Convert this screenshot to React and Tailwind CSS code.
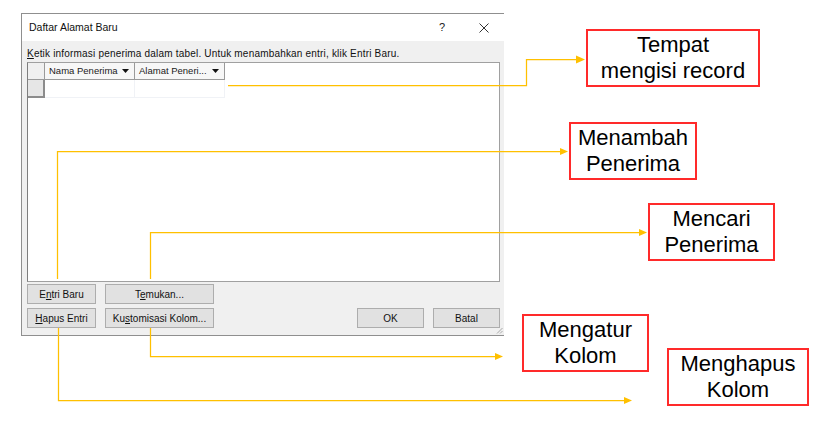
import React from "react";

function HeaderCell({ label }) {
  return (
    <div className="w-[90px] h-full flex items-center justify-between pl-[4px] pr-[5px] bg-[#f7f7f7] border-r border-b border-[#9a9a9a]">
      <span className="text-[9.5px] leading-none text-[#1a1a1a] whitespace-nowrap">{label}</span>
      <svg width="7" height="4" viewBox="0 0 7 4" className="shrink-0">
        <polygon points="0,0 7,0 3.5,4" fill="#111" />
      </svg>
    </div>
  );
}

function Btn({ className, children }) {
  return (
    <div
      className={
        "h-[20px] flex items-center justify-center bg-[#e1e1e1] border border-[#adadad] text-[10px] text-[#111] whitespace-nowrap " +
        className
      }
    >
      {children}
    </div>
  );
}

function Note({ className, lines }) {
  return (
    <div
      className={
        "absolute flex flex-col items-center justify-center border-2 border-[#ff2a2a] bg-white text-[22px] leading-[26.5px] text-black " +
        className
      }
    >
      {lines.map((l) => (
        <span key={l} className="whitespace-nowrap">
          {l}
        </span>
      ))}
    </div>
  );
}

export default function App() {
  const c = "#ffc000";
  return (
    <div className="relative w-[819px] h-[428px] bg-white overflow-hidden font-['Liberation_Sans',Arial,sans-serif]">
      <div className="ml-[21px] pt-[13px]">
        <div className="relative w-[483px] border-l border-t border-b border-[#8f8f8f] bg-[#f0f0f0] flex flex-col">
          {/* title bar */}
          <div className="h-[27px] bg-white flex items-center pl-[7px] pr-[15px]">
            <span className="text-[10.5px] text-[#111]">Daftar Alamat Baru</span>
            <span className="ml-auto text-[11px] text-[#222]">?</span>
            <svg width="10" height="10" viewBox="0 0 10 10" className="ml-[34px]">
              <path d="M0.5 0.5 L9.5 9.5 M9.5 0.5 L0.5 9.5" stroke="#333" strokeWidth="1" />
            </svg>
          </div>
          {/* body */}
          <div className="pl-[5px] pr-[4px] pt-[5px] pb-[7px]">
            <div className="h-[14px] flex items-center text-[10px] tracking-[0.19px] text-[#111] whitespace-nowrap">
              <span>
                <span className="underline">K</span>etik informasi penerima dalam tabel. Untuk menambahkan entri, klik Entri Baru.
              </span>
            </div>
            <div className="mt-[2px] h-[220px] border border-[#a0a0a0] border-l-[#7e7e7e] bg-white">
              <div className="flex h-[17px]">
                <div className="w-[17px] h-full bg-[#f0f0f0] border-r border-b border-[#9a9a9a]" />
                <HeaderCell label="Nama Penerima" />
                <HeaderCell label="Alamat Peneri..." />
              </div>
              <div className="flex h-[18px]">
                <div className="w-[17px] h-full bg-[#e6e6e6] border-r-2 border-b-2 border-[#8c8c8c]" />
                <div className="w-[90px] h-full border-r border-b border-[#f0f2f6]" />
                <div className="w-[90px] h-full border-r border-b border-[#f0f2f6]" />
              </div>
            </div>
            <div className="mt-[2px] flex gap-[9px]">
              <Btn className="w-[69px]">
                <span>
                  E<span className="underline">n</span>tri Baru
                </span>
              </Btn>
              <Btn className="w-[109px]">
                <span>
                  T<span className="underline">e</span>mukan...
                </span>
              </Btn>
            </div>
            <div className="mt-[4px] flex gap-[9px]">
              <Btn className="w-[69px]">
                <span>
                  <span className="underline">H</span>apus Entri
                </span>
              </Btn>
              <Btn className="w-[109px]">
                <span>
                  Ku<span className="underline">s</span>tomisasi Kolom...
                </span>
              </Btn>
              <Btn className="w-[67px] ml-auto">OK</Btn>
              <Btn className="w-[67px]">Batal</Btn>
            </div>
          </div>
          <svg width="7" height="7" viewBox="0 0 7 7" className="absolute right-[1px] bottom-[1px]">
            <path d="M6.5 1 L1 6.5 M6.5 4 L4 6.5" stroke="#a8a8a8" strokeWidth="1" />
          </svg>
        </div>
      </div>

      {/* connectors */}
      <svg className="absolute left-0 top-0 pointer-events-none" width="819" height="428" viewBox="0 0 819 428">
        <g fill="none" stroke={c} strokeWidth="1.25">
          <path d="M228 85.5 H526.5 V59.5 H578" />
          <path d="M57.5 279 V151.5 H562" />
          <path d="M150.5 279 V232.5 H641" />
          <path d="M150.5 328 V356.5 H497" />
          <path d="M58.5 328 V400.5 H626" />
        </g>
        <g fill={c}>
          <polygon points="576,55.5 585,59.5 576,63.5" />
          <polygon points="560,148 568,151.5 560,155" />
          <polygon points="639,229 647,232.5 639,236" />
          <polygon points="495,353 503,356.5 495,360" />
          <polygon points="624,397 632,400.5 624,404" />
        </g>
      </svg>

      <Note className="left-[586px] top-[29px] w-[174px] h-[58px]" lines={["Tempat", "mengisi record"]} />
      <Note className="left-[569px] top-[122px] w-[128px] h-[58px]" lines={["Menambah", "Penerima"]} />
      <Note className="left-[648px] top-[203px] w-[127px] h-[58px]" lines={["Mencari", "Penerima"]} />
      <Note className="left-[522px] top-[314px] w-[127px] h-[58px]" lines={["Mengatur", "Kolom"]} />
      <Note className="left-[667px] top-[348px] w-[142px] h-[58px]" lines={["Menghapus", "Kolom"]} />
    </div>
  );
}
